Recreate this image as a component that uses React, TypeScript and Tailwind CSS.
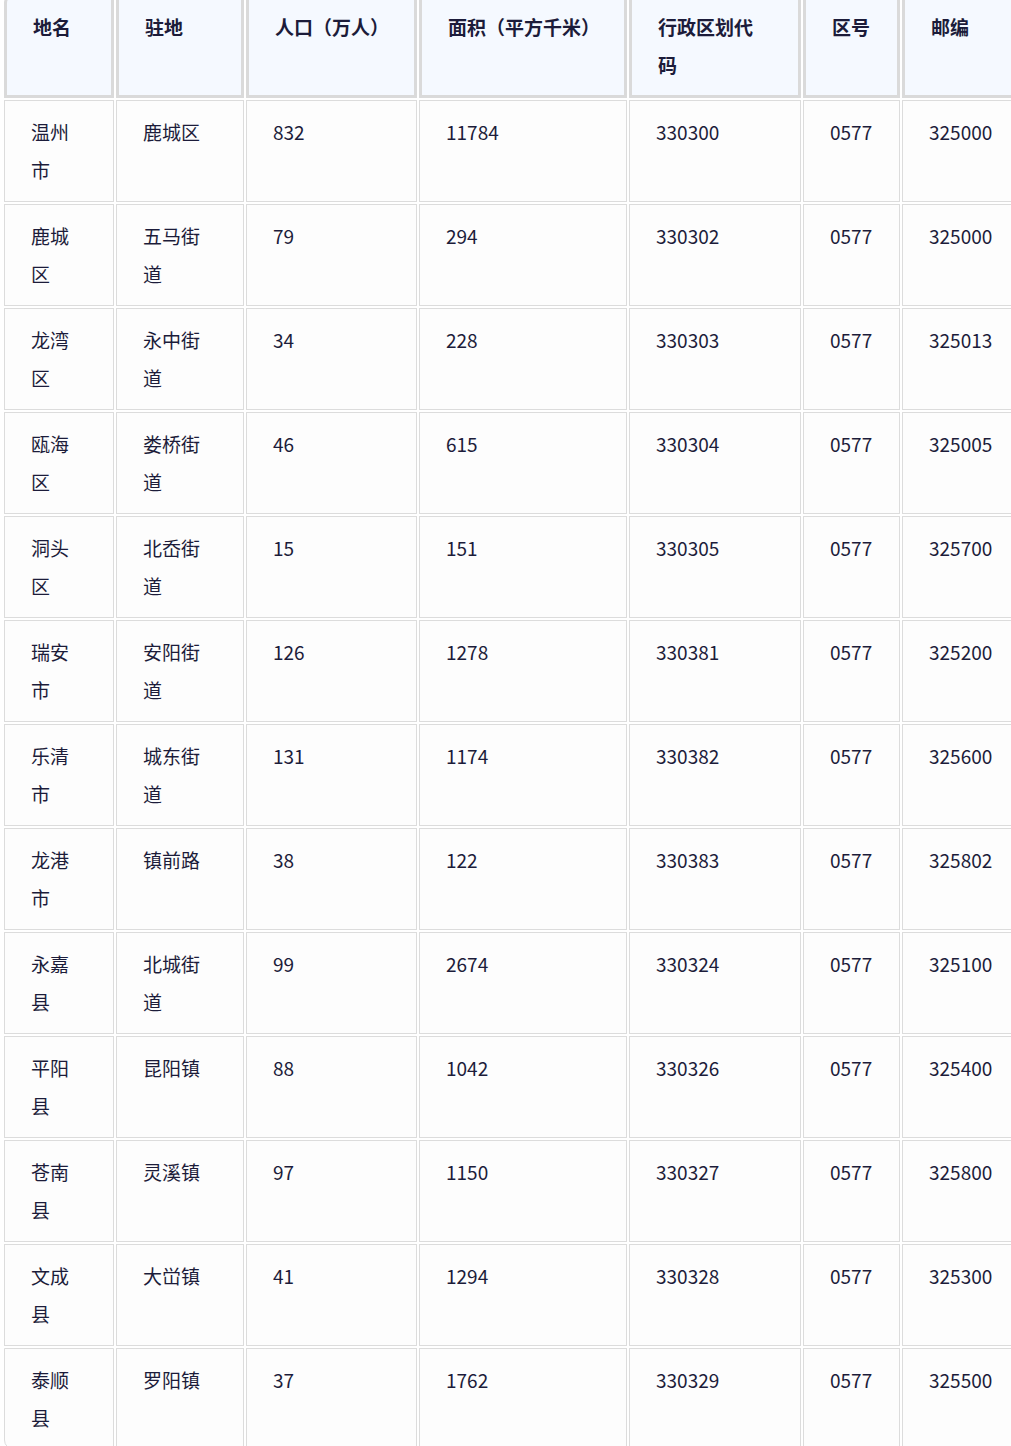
const headers: { label: React.ReactNode; w: string }[] = [
  { label: "地名", w: "w-[110px]" },
  { label: "驻地", w: "w-[128px]" },
  { label: "人口（万人）", w: "w-[171px]" },
  { label: "面积（平方千米）", w: "w-[208px]" },
  {
    label: (
      <>
        行政区划代
        <br />码
      </>
    ),
    w: "w-[172px]",
  },
  { label: "区号", w: "w-[97px]" },
  { label: "邮编", w: "w-[124px]" },
];

// 地名, 驻地, 人口, 面积, 代码, 区号, 邮编
const rows: string[][] = [
  ["温州市", "鹿城区", "832", "11784", "330300", "0577", "325000"],
  ["鹿城区", "五马街道", "79", "294", "330302", "0577", "325000"],
  ["龙湾区", "永中街道", "34", "228", "330303", "0577", "325013"],
  ["瓯海区", "娄桥街道", "46", "615", "330304", "0577", "325005"],
  ["洞头区", "北岙街道", "15", "151", "330305", "0577", "325700"],
  ["瑞安市", "安阳街道", "126", "1278", "330381", "0577", "325200"],
  ["乐清市", "城东街道", "131", "1174", "330382", "0577", "325600"],
  ["龙港市", "镇前路", "38", "122", "330383", "0577", "325802"],
  ["永嘉县", "北城街道", "99", "2674", "330324", "0577", "325100"],
  ["平阳县", "昆阳镇", "88", "1042", "330326", "0577", "325400"],
  ["苍南县", "灵溪镇", "97", "1150", "330327", "0577", "325800"],
  ["文成县", "大峃镇", "41", "1294", "330328", "0577", "325300"],
  ["泰顺县", "罗阳镇", "37", "1762", "330329", "0577", "325500"],
];

export default function App() {
  return (
    <div className="h-[1446px] w-full overflow-hidden bg-white font-['Noto_Sans_CJK_SC','Noto_Sans',sans-serif] text-[19px] leading-[38px] text-[#1c1c3a]">
      <table className="mt-[-9px] ml-[2px] w-[1026px] min-w-[1026px] table-fixed border-separate border-spacing-[2px] text-left">
        <thead>
          <tr>
            {headers.map((h, i) => (
              <th
                key={i}
                className={`${h.w} border-[3px] border-[#dadada] bg-[#f5f9ff] pt-3 pb-[11px] pl-[26px] pr-[22px] align-top font-bold ${
                  i === 0 ? "rounded-tl-[10px]" : ""
                }`}
              >
                {h.label}
              </th>
            ))}
          </tr>
        </thead>
        <tbody>
          {rows.map((r, ri) => (
            <tr key={ri}>
              {r.map((c, ci) => (
                <td
                  key={ci}
                  className={`border border-[#dcdcdc] bg-[#fdfdfd] pl-[26px] pr-[27px] py-3 align-top ${
                    ri === rows.length - 1 && ci === 0 ? "rounded-bl-[10px]" : ""
                  }`}
                >
                  {c}
                </td>
              ))}
            </tr>
          ))}
        </tbody>
      </table>
    </div>
  );
}
